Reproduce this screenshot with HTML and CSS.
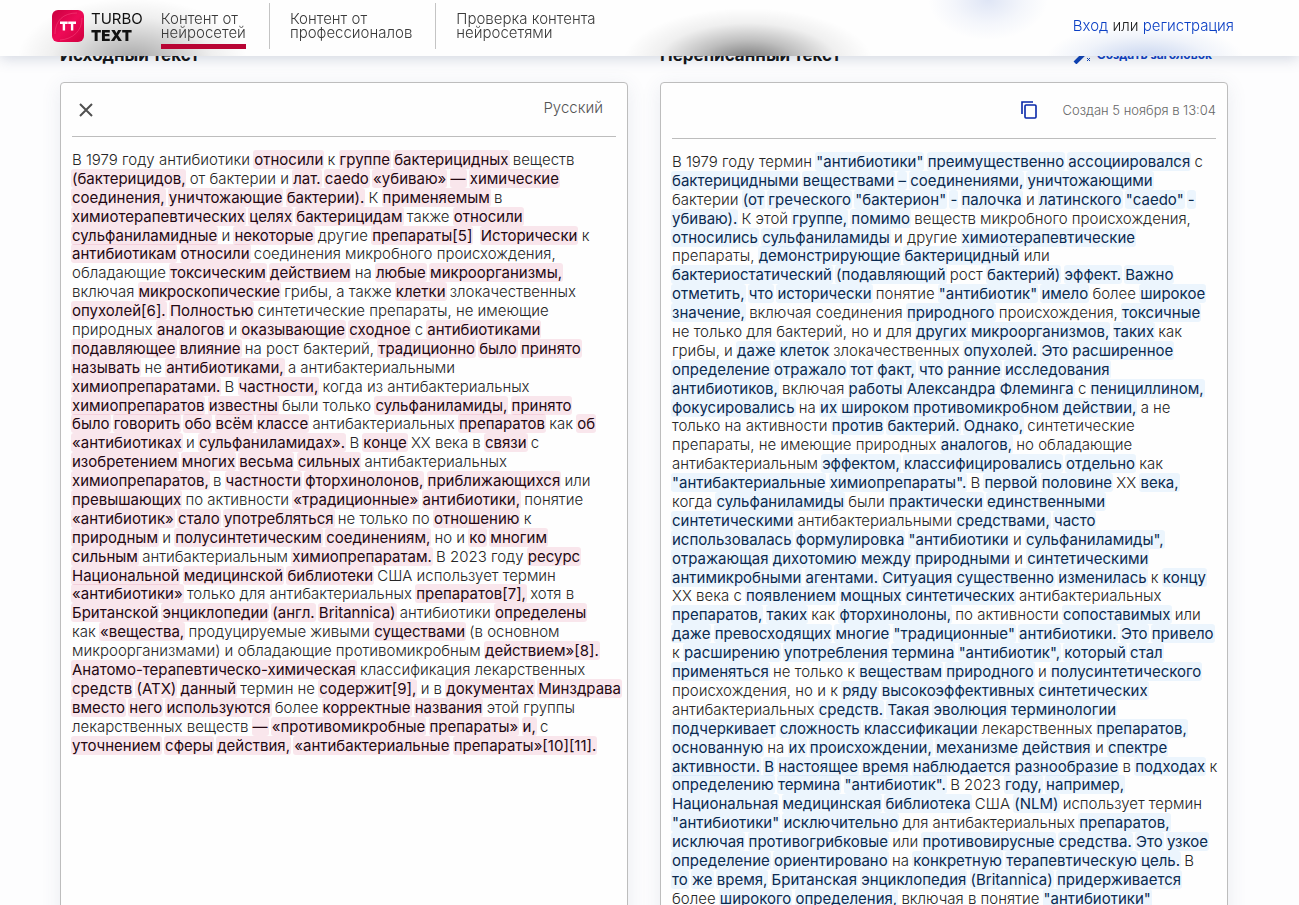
FILE: index.html
```html
<!DOCTYPE html>
<html lang="ru">
<head>
<meta charset="utf-8">
<meta name="viewport" content="width=device-width, initial-scale=1">
<title>Turbo Text</title>
<link rel="stylesheet" href="styles.css">
</head>
<body>
<header class="header">
  <a class="logo" href="#">
    <svg class="logo-icon" viewBox="0 0 32 32" aria-hidden="true">
      <defs><linearGradient id="lg" x1="0" y1="0" x2="1" y2="1"><stop offset="0" stop-color="#c9003f"/><stop offset=".5" stop-color="#ee0a57"/><stop offset="1" stop-color="#d0003f"/></linearGradient></defs>
      <rect width="32" height="32" rx="6" fill="url(#lg)"/>
      <path d="M3 24C3 11 11 3 25 3M30 8C30 21 21 29 8 30" fill="none" stroke="#ff5b8d" stroke-opacity=".4"/>
      <path d="M8 12.800H15.700M11.900 13V20.500M16.200 12.800H24M20.100 13V20.500" fill="none" stroke="#fff" stroke-width="2.400"/>
    </svg>
    <span class="logo-text">TURBO<strong>TEXT</strong></span>
  </a>
  <nav class="nav">
    <a class="nav-item" href="#"><span class="nav-current">Контент от<br>нейросетей</span></a>
    <a class="nav-item" href="#">Контент от<br>профессионалов</a>
    <a class="nav-item" href="#">Проверка контента<br>нейросетями</a>
  </nav>
  <div class="auth"><a href="#">Вход</a> или <a href="#">регистрация</a></div>
</header>
<main class="columns">
  <section class="column">
    <div class="column-head"><h2>Исходный текст</h2></div>
    <article class="card card-source">
      <div class="toolbar">
        <button class="icon-button" type="button" aria-label="Закрыть"><svg width="14" height="14" viewBox="0 0 14 14"><path d="M1 1L13 13M13 1L1 13" stroke="#505050" stroke-width="2"/></svg></button>
        <span class="language">Русский</span>
      </div>
      <p class="text">В 1979 году антибиотики <mark>относили</mark> к <mark>группе</mark> <mark>бактерицидных</mark> веществ<br>
<mark>(бактерицидов,</mark> от бактерии и <mark>лат.</mark> <mark>caedo</mark> <mark>«убиваю»</mark> <mark>—</mark> <mark>химические</mark><br>
<mark>соединения,</mark> <mark>уничтожающие</mark> <mark>бактерии).</mark> К <mark>применяемым</mark> в<br>
<mark>химиотерапевтических</mark> <mark>целях</mark> <mark>бактерицидам</mark> также <mark>относили</mark><br>
<mark>сульфаниламидные</mark> и <mark>некоторые</mark> другие <mark>препараты[5]</mark> &nbsp;<mark>Исторически</mark> к<br>
<mark>антибиотикам</mark> <mark>относили</mark> соединения микробного происхождения,<br>
обладающие <mark>токсическим</mark> <mark>действием</mark> на <mark>любые</mark> <mark>микроорганизмы,</mark><br>
включая <mark>микроскопические</mark> грибы, а также <mark>клетки</mark> злокачественных<br>
<mark>опухолей[6].</mark> <mark>Полностью</mark> синтетические препараты, не имеющие<br>
природных <mark>аналогов</mark> и <mark>оказывающие</mark> <mark>сходное</mark> с <mark>антибиотиками</mark><br>
<mark>подавляющее</mark> <mark>влияние</mark> на рост бактерий, <mark>традиционно</mark> <mark>было</mark> <mark>принято</mark><br>
<mark>называть</mark> не <mark>антибиотиками,</mark> а антибактериальными<br>
<mark>химиопрепаратами.</mark> В <mark>частности,</mark> когда из антибактериальных<br>
<mark>химиопрепаратов</mark> <mark>известны</mark> были только <mark>сульфаниламиды,</mark> <mark>принято</mark><br>
<mark>было</mark> <mark>говорить</mark> <mark>обо</mark> <mark>всём</mark> <mark>классе</mark> антибактериальных <mark>препаратов</mark> как <mark>об</mark><br>
<mark>«антибиотиках</mark> и <mark>сульфаниламидах».</mark> В <mark>конце</mark> XX века в <mark>связи</mark> с<br>
<mark>изобретением</mark> <mark>многих</mark> <mark>весьма</mark> <mark>сильных</mark> антибактериальных<br>
<mark>химиопрепаратов,</mark> в <mark>частности</mark> <mark>фторхинолонов,</mark> <mark>приближающихся</mark> или<br>
<mark>превышающих</mark> по активности <mark>«традиционные»</mark> <mark>антибиотики,</mark> понятие<br>
<mark>«антибиотик»</mark> <mark>стало</mark> <mark>употребляться</mark> не только по <mark>отношению</mark> к<br>
<mark>природным</mark> и <mark>полусинтетическим</mark> <mark>соединениям,</mark> но и <mark>ко</mark> <mark>многим</mark><br>
<mark>сильным</mark> антибактериальным <mark>химиопрепаратам.</mark> В 2023 году <mark>ресурс</mark><br>
<mark>Национальной</mark> <mark>медицинской</mark> <mark>библиотеки</mark> США использует термин<br>
<mark>«антибиотики»</mark> только для антибактериальных <mark>препаратов[7],</mark> хотя в<br>
<mark>Британской</mark> <mark>энциклопедии</mark> <mark>(англ.</mark> <mark>Britannica)</mark> антибиотики <mark>определены</mark><br>
как <mark>«вещества,</mark> продуцируемые живыми <mark>существами</mark> (в основном<br>
микроорганизмами) и обладающие противомикробным <mark>действием»[8].</mark><br>
<mark>Анатомо-терапевтическо-химическая</mark> классификация лекарственных<br>
<mark>средств</mark> <mark>(АТХ)</mark> <mark>данный</mark> термин не <mark>содержит[9],</mark> и в <mark>документах</mark> <mark>Минздрава</mark><br>
<mark>вместо</mark> <mark>него</mark> <mark>используются</mark> более <mark>корректные</mark> <mark>названия</mark> этой группы<br>
лекарственных веществ <mark>—</mark> <mark>«противомикробные</mark> <mark>препараты»</mark> <mark>и,</mark> с<br>
<mark>уточнением</mark> <mark>сферы</mark> <mark>действия,</mark> <mark>«антибактериальные</mark> <mark>препараты»[10][11].</mark></p>
    </article>
  </section>
  <section class="column">
    <div class="column-head"><h2>Переписанный текст</h2>
      <a class="make-title" href="#"><svg width="18" height="18" viewBox="0 0 18 18" aria-hidden="true"><path d="M2 17L13 6" stroke="#0b3fb5" stroke-width="4"/><path d="M14 12L17 15M17 12L14 15M4 2L7 5M7 2L4 5" stroke="#0b3fb5"/></svg>Создать заголовок</a></div>
    <article class="card card-result">
      <div class="toolbar">
        <button class="icon-button" type="button" aria-label="Копировать"><svg width="16" height="18" viewBox="0 0 16 18" fill="none" stroke="#0726a8" stroke-width="1.600"><path d="M1 13V1H12"/><rect x="4" y="4" width="11" height="13" rx="1"/></svg></button>
        <time class="created">Создан 5 ноября в 13:04</time>
      </div>
      <p class="text">В 1979 году термин <mark>"антибиотики"</mark> <mark>преимущественно</mark> <mark>ассоциировался</mark> с<br>
<mark>бактерицидными</mark> <mark>веществами</mark> <mark>–</mark> <mark>соединениями,</mark> <mark>уничтожающими</mark><br>
бактерии <mark>(от</mark> <mark>греческого</mark> <mark>"бактерион"</mark> <mark>-</mark> <mark>палочка</mark> и <mark>латинского</mark> <mark>"caedo"</mark> <mark>-</mark><br>
<mark>убиваю).</mark> К этой <mark>группе,</mark> <mark>помимо</mark> веществ микробного происхождения,<br>
<mark>относились</mark> <mark>сульфаниламиды</mark> и другие <mark>химиотерапевтические</mark><br>
препараты, <mark>демонстрирующие</mark> <mark>бактерицидный</mark> или<br>
<mark>бактериостатический</mark> <mark>(подавляющий</mark> рост <mark>бактерий)</mark> <mark>эффект.</mark> <mark>Важно</mark><br>
<mark>отметить,</mark> <mark>что</mark> <mark>исторически</mark> понятие <mark>"антибиотик"</mark> <mark>имело</mark> более <mark>широкое</mark><br>
<mark>значение,</mark> включая соединения <mark>природного</mark> происхождения, <mark>токсичные</mark><br>
не только для бактерий, но и для <mark>других</mark> <mark>микроорганизмов,</mark> <mark>таких</mark> как<br>
грибы, и <mark>даже</mark> <mark>клеток</mark> злокачественных <mark>опухолей.</mark> <mark>Это</mark> <mark>расширенное</mark><br>
<mark>определение</mark> <mark>отражало</mark> <mark>тот</mark> <mark>факт,</mark> <mark>что</mark> <mark>ранние</mark> <mark>исследования</mark><br>
<mark>антибиотиков,</mark> включая <mark>работы</mark> <mark>Александра</mark> <mark>Флеминга</mark> с <mark>пенициллином,</mark><br>
<mark>фокусировались</mark> на <mark>их</mark> <mark>широком</mark> <mark>противомикробном</mark> <mark>действии,</mark> а не<br>
только на активности <mark>против</mark> <mark>бактерий.</mark> <mark>Однако,</mark> синтетические<br>
препараты, не имеющие природных <mark>аналогов,</mark> но обладающие<br>
антибактериальным <mark>эффектом,</mark> <mark>классифицировались</mark> <mark>отдельно</mark> как<br>
<mark>"антибактериальные</mark> <mark>химиопрепараты".</mark> В <mark>первой</mark> <mark>половине</mark> XX <mark>века,</mark><br>
когда <mark>сульфаниламиды</mark> были <mark>практически</mark> <mark>единственными</mark><br>
<mark>синтетическими</mark> антибактериальными <mark>средствами,</mark> <mark>часто</mark><br>
<mark>использовалась</mark> <mark>формулировка</mark> <mark>"антибиотики</mark> и <mark>сульфаниламиды",</mark><br>
<mark>отражающая</mark> <mark>дихотомию</mark> <mark>между</mark> <mark>природными</mark> и <mark>синтетическими</mark><br>
<mark>антимикробными</mark> <mark>агентами.</mark> <mark>Ситуация</mark> <mark>существенно</mark> <mark>изменилась</mark> к <mark>концу</mark><br>
XX века с <mark>появлением</mark> <mark>мощных</mark> <mark>синтетических</mark> антибактериальных<br>
<mark>препаратов,</mark> <mark>таких</mark> как <mark>фторхинолоны,</mark> по активности <mark>сопоставимых</mark> или<br>
<mark>даже</mark> <mark>превосходящих</mark> <mark>многие</mark> <mark>"традиционные"</mark> <mark>антибиотики.</mark> <mark>Это</mark> <mark>привело</mark><br>
к <mark>расширению</mark> <mark>употребления</mark> <mark>термина</mark> <mark>"антибиотик",</mark> <mark>который</mark> <mark>стал</mark><br>
<mark>применяться</mark> не только к <mark>веществам</mark> <mark>природного</mark> и <mark>полусинтетического</mark><br>
происхождения, но и к <mark>ряду</mark> <mark>высокоэффективных</mark> <mark>синтетических</mark><br>
антибактериальных <mark>средств.</mark> <mark>Такая</mark> <mark>эволюция</mark> <mark>терминологии</mark><br>
<mark>подчеркивает</mark> <mark>сложность</mark> <mark>классификации</mark> лекарственных <mark>препаратов,</mark><br>
<mark>основанную</mark> на <mark>их</mark> <mark>происхождении,</mark> <mark>механизме</mark> <mark>действия</mark> и <mark>спектре</mark><br>
<mark>активности.</mark> <mark>В</mark> <mark>настоящее</mark> <mark>время</mark> <mark>наблюдается</mark> <mark>разнообразие</mark> в <mark>подходах</mark> к<br>
<mark>определению</mark> <mark>термина</mark> <mark>"антибиотик".</mark> В 2023 <mark>году,</mark> <mark>например,</mark><br>
<mark>Национальная</mark> <mark>медицинская</mark> <mark>библиотека</mark> США <mark>(NLM)</mark> использует термин<br>
<mark>"антибиотики"</mark> <mark>исключительно</mark> для антибактериальных <mark>препаратов,</mark><br>
<mark>исключая</mark> <mark>противогрибковые</mark> или <mark>противовирусные</mark> <mark>средства.</mark> <mark>Это</mark> <mark>узкое</mark><br>
<mark>определение</mark> <mark>ориентировано</mark> на <mark>конкретную</mark> <mark>терапевтическую</mark> <mark>цель.</mark> В<br>
<mark>то</mark> <mark>же</mark> <mark>время,</mark> <mark>Британская</mark> <mark>энциклопедия</mark> <mark>(Britannica)</mark> <mark>придерживается</mark><br>
более <mark>широкого</mark> <mark>определения,</mark> включая в понятие <mark>"антибиотики"</mark></p>
    </article>
  </section>
</main>
</body>
</html>
```
FILE: styles.css
```css
* { box-sizing: border-box; }

body {
  margin: 0;
  height: 100vh;
  overflow: hidden;
  background: #fdfdfe;
  color: #262626;
  font-family: Inter, "Open Sans", sans-serif;
  font-size: 15px;
  font-weight: 300;
}

a { color: #0b3fc4; text-decoration: none; }
button { border: 0; padding: 0; background: none; display: flex; cursor: pointer; }

.header {
  position: fixed;
  inset: 0 0 auto 0;
  z-index: 2;
  height: 56px;
  padding: 0 65px 0 52px;
  display: flex;
  align-items: flex-start;
  background:
    radial-gradient(ellipse 115px 62px at 132px 60px, rgba(0, 0, 0, .34), rgba(0, 0, 0, .2) 35%, rgba(0, 0, 0, .06) 70%, transparent),
    radial-gradient(ellipse 125px 54px at 748px 62px, rgba(0, 0, 0, .56), rgba(0, 0, 0, .25) 40%, rgba(0, 0, 0, .06) 72%, transparent),
    radial-gradient(ellipse 60px 40px at 988px 0, rgba(60, 100, 200, .16), rgba(60, 100, 200, .05) 60%, transparent),
    radial-gradient(ellipse 100px 36px at 1145px 60px, rgba(50, 100, 200, .28), rgba(50, 100, 200, .07) 65%, transparent),
    #fefefe;
  box-shadow: 0 2px 14px rgba(60, 80, 120, .24);
}

.logo { display: flex; gap: 7px; padding-top: 10px; color: #111; }
.logo-icon { width: 32px; height: 32px; }
.logo-text { font-size: 15px; font-weight: 400; line-height: 17px; }
.logo-text strong { display: block; font-weight: 900; }

.nav { display: flex; padding-top: 3px; margin-left: 18px; }
.nav-item {
  height: 46px;
  padding: 9px 23px 0 20px;
  border-left: 1px solid #c4c4c4;
  color: #3a3a3a;
  line-height: 14px;
}
.nav-item:first-child { padding-left: 0; border-left: 0; }
.nav-current { display: block; height: 37px; border-bottom: 5px solid #b80434; }

.auth { margin: 17px 0 0 auto; color: #222; line-height: 18px; }

.columns {
  display: grid;
  grid-template-columns: repeat(2, minmax(0, 1fr));
  gap: 32px;
  padding: 44px 71px 0 60px;
}
.column-head { height: 38px; display: flex; justify-content: space-between; align-items: flex-start; }
.column-head h2 { margin: 0; color: #111; font-size: 17px; font-weight: 700; line-height: 22px; }
.make-title { display: flex; gap: 6px; margin-right: 16px; padding-top: 2px; font-size: 12px; font-weight: 700; line-height: 18px; }

.card {
  height: 100vh;
  padding: 0 11px;
  border: 1px solid #bdbdbd;
  border-radius: 4px;
  background: #fefefe;
  box-shadow: 0 4px 20px rgba(60, 80, 120, .1);
}
.toolbar {
  display: flex;
  align-items: center;
  height: 54px;
  border-bottom: 1px solid #bdbdbd;
}
.card-source .toolbar { justify-content: space-between; padding: 0 13px 0 7px; }
.card-result .toolbar { justify-content: flex-end; gap: 26px; height: 56px; padding-bottom: 2px; }
.language { padding-bottom: 4px; color: #555; }
.created { color: #666; font-size: 13px; }

.text {
  margin: 14px 0 0;
  line-height: 1.26;
  white-space: nowrap;
}
mark {
  margin: 0 -1px;
  padding: 0 1px;
  border-radius: 3px;
  font-weight: 400;
}
.card-source mark { background: rgba(205, 40, 90, .11); color: #240812; }
.card-result mark { background: rgba(30, 145, 240, .08); color: #0a2a50; }
```
